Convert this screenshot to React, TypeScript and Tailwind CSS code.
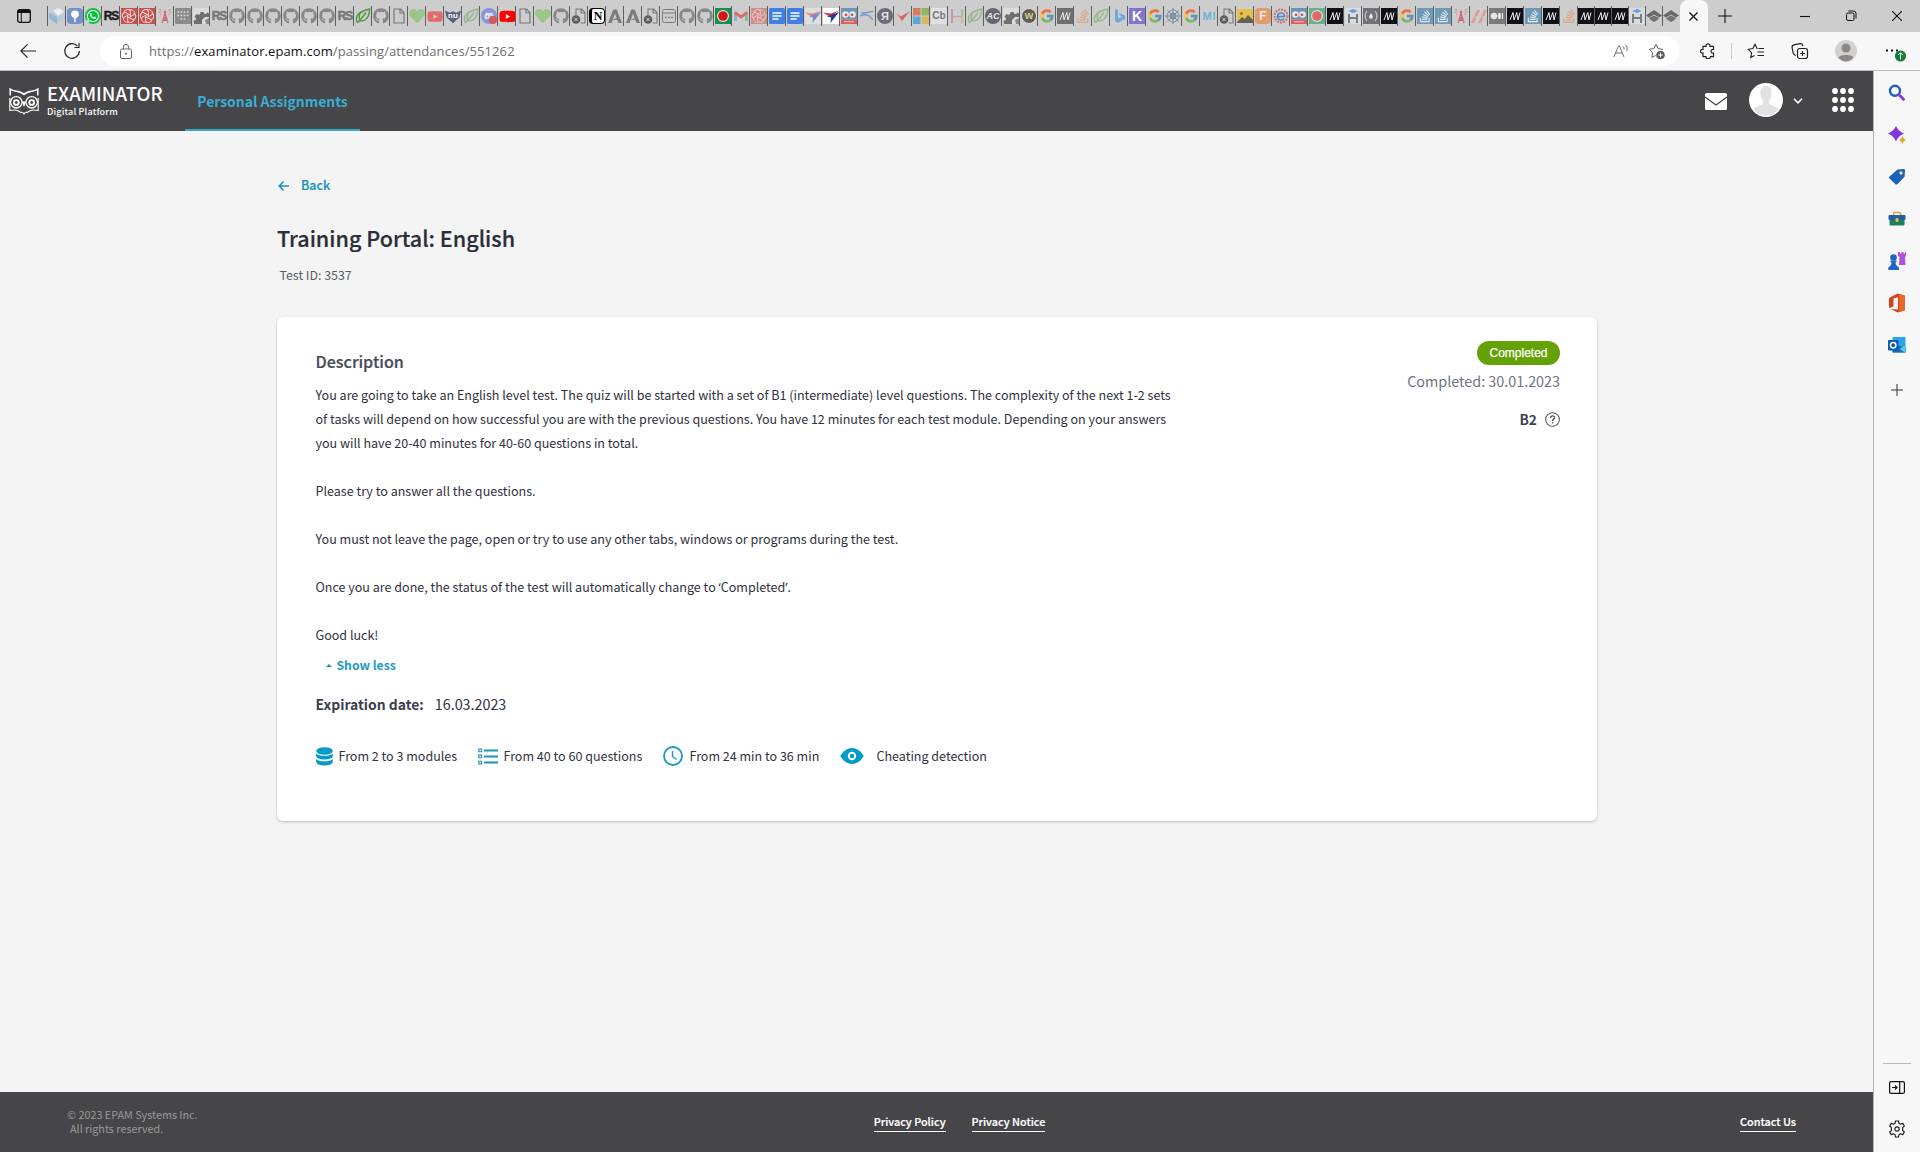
import React from "react";
import { FaGithub, FaWhatsapp, FaYoutube, FaStackOverflow, FaHeart, FaDiscord } from "react-icons/fa";
import { FcGoogle } from "react-icons/fc";

type Kids = { children?: React.ReactNode };

/* ---------- tab favicons ---------- */

function Tile({ className = "", children }: Kids & { className?: string }) {
  return (
    <span className={`flex h-4 w-4 items-center justify-center overflow-hidden font-['Liberation_Sans',sans-serif] leading-none ${className}`}>
      {children}
    </span>
  );
}

function Svg16({ className = "", children }: Kids & { className?: string }) {
  return (
    <svg viewBox="0 0 16 16" className={`h-4 w-4 ${className}`} fill="none">
      {children}
    </svg>
  );
}

const Cube = () => (
  <Svg16>
    <path d="M0 5l8-4 8 4v5l-8 6-8-6z" fill="#b9cbd6" />
    <path d="M0 5l8 4v7l-8-6z" fill="#8fb9d4" />
    <path d="M4 2.500L10 0l5 4-6 4z" fill="#eceeef" />
  </Svg16>
);
const Pin = () => (
  <Tile className="rounded-sm bg-[#7590cc]">
    <svg viewBox="0 0 16 16" className="h-4 w-4"><path d="M8 2.500a4 4 0 0 1 4 4c0 2-2.500 3-3.300 4.200V14H7.300v-3.300C6.500 9.500 4 8.500 4 6.500a4 4 0 0 1 4-4z" fill="#fff" /></svg>
  </Tile>
);
const Whats = () => (
  <Tile className="rounded-lg bg-[#0fc143]"><FaWhatsapp className="h-3.5 w-3.5 text-white" /></Tile>
);
const RsDark = () => <Tile className="text-[12px] font-black tracking-[-1px] text-[#1d1d1d] [-webkit-text-stroke:0.500px_#1d1d1d]">RS</Tile>;
const Rs = () => <Tile className="text-[12px] font-black tracking-[-1px] text-[#777] [-webkit-text-stroke:0.500px_#777]">RS</Tile>;
const petal = "M8 2.200c3-1.600 6.200 1 5.200 4.300L8.500 9.200";
const spiral = (
  <g stroke="#f3dcdb" strokeWidth="1" fill="none">
    <path d={petal} />
    <path d={petal} transform="rotate(60 8 8)" />
    <path d={petal} transform="rotate(120 8 8)" />
    <path d={petal} transform="rotate(180 8 8)" />
    <path d={petal} transform="rotate(240 8 8)" />
    <path d={petal} transform="rotate(300 8 8)" />
  </g>
);
const Red = () => <Svg16><rect width="16" height="16" fill="#cb4f4c" />{spiral}</Svg16>;
const RedPale = () => <Svg16><rect width="16" height="16" fill="#d08c8a" /><g opacity=".7">{spiral}</g></Svg16>;
const Tower = () => (
  <Svg16>
    <path d="M8 5L5 15M8 5l3 10M6.500 9.500h3M5.800 12.500h4.400M6.500 9.500l3.700 3M9.500 9.500l-3.700 3" stroke="#d36b72" strokeWidth="1.200" />
    <circle cx="8" cy="4" r="1.300" fill="#d36b72" />
    <path d="M4.500 6L3 7M4.500 2.500L2 1M4 4.200H1.500M11.500 6L13 7M11.500 2.500L14 1M12 4.200h2.500" stroke="#d98a8f" />
  </Svg16>
);
const Dots = () => (
  <Svg16>
    <rect width="16" height="16" rx="1" fill="#8b8b8b" />
    <path d="M2.500 4h11M2.500 7.500h11" stroke="#ddd" strokeWidth="1.600" strokeDasharray="1.600 1.500" />
    <path d="M5.500 11h5" stroke="#ddd" strokeWidth="1.600" strokeDasharray="1.600 1.500" />
  </Svg16>
);
const Gear = () => (
  <Svg16>
    <rect width="16" height="16" fill="#dcdcdc" />
    <path d="M1 16l-.5-3 2.300-1.200.2-1.300-1.500-2L3.500 6l2.300.8 1.200-.6L7.500 4h3l.7 1.800L13 6l1.500-1.500L16 5.500V9h-4l-3 3v4z" fill="#6f6f6f" />
    <path d="M12 12l4-2v6h-3z" fill="#8a8a8a" />
  </Svg16>
);
const Git = () => <FaGithub className="h-4 w-4 text-[#878787]" />;
const leafPath = (
  <>
    <path d="M2 14C-.5 7 5 3.500 14.500 1 15 8 11 14.500 4 12.500" />
    <path d="M2 15C5 12 8 9 11 4.500M5 12C3.500 9 4.500 6 6 4" />
  </>
);
const Leaf = () => <Svg16><g stroke="#4f9a3c" strokeWidth="1.400">{leafPath}</g></Svg16>;
const LeafPale = () => <Svg16><g stroke="#94b98a" strokeWidth="1.400">{leafPath}</g></Svg16>;
const Doc = () => <Svg16><path d="M3 1h6.500L13 4.700V15H3zM9 1v4h4" stroke="#777" strokeWidth="1.200" /></Svg16>;
const DocX = () => (
  <Svg16>
    <path d="M5 8V1h5.500L14 4.500V15H9.500M10 1v4h4" stroke="#777" strokeWidth="1.100" />
    <circle cx="5" cy="11.500" r="4.300" fill="#5f5f5f" />
    <path d="M3.600 10.100l2.800 2.800M6.400 10.100l-2.800 2.800" stroke="#ddd" />
  </Svg16>
);
const Heart = () => <FaHeart className="h-4 w-4 text-[#9cc48d]" />;
const YtPale = () => <FaYoutube className="h-[17px] w-[17px] text-[#e26a6d]" />;
const Yt = () => <Tile className="bg-[radial-gradient(#fff_30%,transparent_31%)]"><FaYoutube className="h-[17px] w-[17px] shrink-0 text-[#f00]" /></Tile>;
const Nu = () => (
  <Tile className="text-[8px] font-bold text-white">
    <span className="flex h-4 w-4 items-center justify-center bg-[#5d617d] [clip-path:polygon(0_15%,30%_30%,50%_20%,70%_30%,100%_15%,90%_60%,50%_95%,10%_60%)]">nu</span>
  </Tile>
);
const Discord = () => (
  <span className="relative">
    <Tile className="rounded-full bg-[#8a94dc]"><FaDiscord className="h-2.5 w-2.5 text-[#dfe1f0]" /></Tile>
    <span className="absolute right-0 bottom-0 h-2 w-2 rounded-full bg-[#d7575b]" />
  </span>
);
const Notion = () => <Tile className="rounded-sm border-[1.500px] border-l-[3px] border-black bg-white font-['Liberation_Serif',serif] text-[12px] font-bold text-black">N</Tile>;
const Ay = () => (
  <Svg16>
    <path d="M1 15L6.300 1.500h3.400L15 15h-3.600L8 5.500 4.600 15z" fill="#7c7c7c" />
    <path d="M5 12l6-2.500v2.300z" fill="#7c7c7c" />
  </Svg16>
);
const Browser = () => (
  <Svg16>
    <rect x="1.500" y="1.500" width="13" height="13" rx="2" stroke="#7b7b7b" />
    <path d="M1.500 5h13" stroke="#7b7b7b" />
    <path d="M4 9.500h8" stroke="#777" strokeWidth="1.600" strokeDasharray="1.600 1.500" />
  </Svg16>
);
const Rec = () => (
  <Svg16><rect width="16" height="16" fill="#12914f" /><circle cx="8" cy="8" r="6" fill="#f0dcd8" /><circle cx="8" cy="8" r="4.800" fill="#d6141b" /></Svg16>
);
const RecPale = () => (
  <Svg16><rect width="16" height="16" fill="#66b48c" /><circle cx="8" cy="8" r="6" fill="#e6d9d6" /><circle cx="8" cy="8" r="4.800" fill="#dd6a6d" /></Svg16>
);
const Gmail = () => (
  <Svg16>
    <path d="M1 13V4h3v9z" fill="#8fb0e0" /><path d="M12 13V4h3v9z" fill="#86bf93" />
    <path d="M1.800 4.500L8 9l6.200-4.500" stroke="#dd6f68" strokeWidth="2.800" />
  </Svg16>
);
const GDoc = () => <Svg16><rect width="16" height="16" rx="1.500" fill="#3f7fe8" /><path d="M3.500 5h9M3.500 8h9M3.500 11h6" stroke="#fff" strokeWidth="1.500" /></Svg16>;
const plane = (
  <>
    <path d="M0 4.500l8 1L16 2.500 7 9z" fill="#da3a3f" />
    <path d="M4 8.500L16 4 7.500 15 8 9.500z" fill="#243a9c" />
  </>
);
const PlanePale = () => <Svg16><rect width="16" height="16" fill="#dedede" /><g opacity=".5">{plane}</g></Svg16>;
const Plane = () => <Svg16><rect width="16" height="16" fill="#fff" />{plane}</Svg16>;
const Owl = () => (
  <Svg16>
    <rect width="16" height="11.500" fill="#6d93b5" /><rect y="11.500" width="16" height="4.500" fill="#d9605f" />
    <circle cx="4.500" cy="6.500" r="3.300" fill="#e7e9eb" /><circle cx="11.500" cy="6.500" r="3.300" fill="#e7e9eb" />
    <circle cx="5" cy="6.800" r="1.400" fill="#c85050" /><circle cx="11" cy="6.800" r="1.400" fill="#c85050" />
    <path d="M3 13.700h10" stroke="#f0c9c8" />
  </Svg16>
);
const Swoosh = () => <Svg16><path d="M2 4.500C5 6 10 3.500 14.500 3.500M1 8C5 5.500 11 6.500 13.500 12" stroke="#7d9dcb" strokeWidth="1.600" /></Svg16>;
const Ya = () => <Tile className="rounded-full bg-[#6d6d7c] text-[11px] font-bold text-[#e3e3e3]">Я</Tile>;
const Check = () => <Svg16><path d="M1.500 5.500L6 8.500 15 3 7 13z" fill="#d86760" /></Svg16>;
const Ms = () => <Svg16><path d="M0 0h7.500v7.500H0z" fill="#d97b5d" /><path d="M8.500 0H16v7.500H8.500z" fill="#91b560" /><path d="M0 8.500h7.500V16H0z" fill="#5da8ce" /><path d="M8.500 8.500H16V16H8.500z" fill="#dbb65a" /></Svg16>;
const Cb = () => <Tile className="bg-[#e0e0e0] text-[10px] font-bold text-[#777]">Cb</Tile>;
const HColor = () => <Svg16><path d="M3 1v14" stroke="#b98ab9" strokeWidth="1.500" /><path d="M3 8.500h10" stroke="#d69aa0" strokeWidth="1.500" /><path d="M13 1v7" stroke="#9ab68f" strokeWidth="1.500" /><path d="M13 8v7" stroke="#c9b37b" strokeWidth="1.500" /></Svg16>;
const Ac = () => <Tile className="rounded-full bg-[#666671] text-[9px] font-bold text-[#e5e5e5] italic">AC</Tile>;
const Wt = () => <Tile className="rounded-full border border-[#ddd] bg-[#5f5e54] text-[9px] font-bold text-[#d9cf8b]">W</Tile>;
const Goo = () => <FcGoogle className="h-4 w-4 opacity-65" />;
const mPath = <path d="M3 12L6 4.500M7 12l2.800-7.500M11 12l2-7.500M6 4.500L7 12M9.800 4.500L11 12" stroke="#eee" strokeWidth="1" />;
const MGrey = () => <Svg16><rect width="16" height="16" fill="#6f6f6f" />{mPath}</Svg16>;
const Mdn = () => <Svg16><rect width="16" height="16" fill="#101018" />{mPath}</Svg16>;
const StackO = () => <FaStackOverflow className="h-4 w-4 text-[#d8aa85]" />;
const StackB = () => <Tile className="bg-[#6e9ab8]"><FaStackOverflow className="h-3.5 w-3.5 text-[#dfe8ee]" /></Tile>;
const Bing = () => <Svg16><path d="M4 1l3 1v8.500l4-2-2-1L8 5l6 2.500V11l-7 4-3-2z" fill="#6fa9da" /></Svg16>;
const Kt = () => <Tile className="bg-[#8274cf] text-[14px] font-bold text-white">K</Tile>;
const Web = () => (
  <Svg16><g stroke="#6d8ba3" strokeWidth=".9"><path d="M8 0v16M0 8h16M2.300 2.300l11.400 11.400M13.700 2.300L2.300 13.700" /><circle cx="8" cy="8" r="3" fill="#7f9bb0" /><circle cx="8" cy="8" r="6" /></g></Svg16>
);
const Mi = () => <Tile className="gap-px text-[11px] font-bold text-[#6fb4d8]"><span>M</span><span>I</span></Tile>;
const Pic = () => <Svg16><rect y="1" width="16" height="14" fill="#e3bf4c" /><path d="M0 14l5-5 3 2 3-4 5 5v3H0z" fill="#666055" /><circle cx="4.500" cy="5.500" r="1.500" fill="#b5603a" /></Svg16>;
const Ft = () => <Tile className="rounded-sm bg-[#e39a6c] text-[12px] font-bold text-[#f6e9df]">F</Tile>;
const Eg = () => (
  <Svg16>
    <circle cx="8" cy="8" r="6.500" stroke="#cf7272" strokeWidth="2" strokeDasharray="2 1" />
    <path d="M4.500 8.500h7C11.500 3.500 4.500 4 4.500 8.500c0 4 5 4.500 6.500 2" stroke="#5685bd" strokeWidth="1.600" />
  </Svg16>
);
const HBlue = () => (
  <Svg16><rect width="16" height="16" fill="#d9dbde" /><path d="M4 6v9M12 6v9M4 10h8" stroke="#777b82" strokeWidth="2" /><path d="M3 3l5-2 5 2-5 2z" fill="#6d9be0" /></Svg16>
);
const FreeC = () => (
  <Svg16><rect width="16" height="16" fill="#71717c" /><path d="M4 3C1.500 6 1.500 10 4 13M12 3c2.500 3 2.500 7 0 10" stroke="#e4e4e4" /><path d="M8 4.500c.3 1.500 2.200 3 1.800 4.800-.4 2-3.200 2-3.600 0C5.800 8 7.500 6.500 8 4.500z" fill="#e4e4e4" /></Svg16>
);
const Stripes = () => <Svg16><path d="M0 15L6 2h3L3 15zM7 15l6-13h3l-6 13z" fill="#dc9d94" /><path d="M1 9h6M8 9h6" stroke="#cdcdcd" /></Svg16>;
const Med = () => <Svg16><rect width="16" height="16" fill="#7a7a7a" /><circle cx="5" cy="8" r="3.300" fill="#e6e6e6" /><ellipse cx="10.500" cy="8" rx="1.500" ry="3.200" fill="#e6e6e6" /><path d="M13.500 5v6" stroke="#e6e6e6" strokeWidth="1.200" /></Svg16>;
const Grad = () => (
  <Svg16><path d="M0 7.500l8-5.500 8 5.500-3 2L8 6.500l-5 3z" fill="#686868" /><path d="M3 10l5-2.500 5 2.500-1.500 2L8 14l-3.500-2z" fill="#747474" /></Svg16>
);

const TABS: React.FC[] = [
  Cube, Pin, Whats, RsDark, Red, Red, Tower, Dots, Gear, Rs, Git, Git, Git, Git, Git, Git, Rs, Leaf, Git, Doc,
  Heart, YtPale, Nu, LeafPale, Discord, Yt, Doc, Heart, Git, DocX, Notion, Ay, Ay, DocX, Browser, Git, Git, Rec, Gmail, RedPale,
  GDoc, GDoc, PlanePale, Plane, Owl, Swoosh, Ya, Check, Ms, Cb, HColor, LeafPale, Ac, Gear, Wt, Goo, MGrey, StackO, LeafPale, Bing,
  Kt, Goo, Web, Goo, Mi, DocX, Pic, Ft, Eg, Owl, RecPale, Mdn, HBlue, FreeC, Mdn, Goo, StackB, StackB, Tower, Stripes,
  Med, Mdn, StackB, Mdn, StackO,
];
const TABS_NARROW: React.FC[] = [Mdn, Mdn, Mdn, HBlue, Grad, Grad];

function TabStrip() {
  return (
    <div className="flex h-8 items-center bg-[#cdcdcd]">
      <div className="flex w-[47px] shrink-0 justify-center">
        <svg viewBox="0 0 14 14" className="h-3.5 w-3.5" fill="none" stroke="#111">
          <rect x=".7" y=".7" width="12.600" height="12.600" rx="2" strokeWidth="1.300" />
          <path d="M.7 2.500h12.600" strokeWidth="3" /><path d="M4.300 3v10" strokeWidth="1" />
        </svg>
      </div>
      {TABS.map((Icon, i) => (
        <div key={i} className="flex h-5 w-[18.010px] shrink-0 items-center border-l border-[#5f5f5f] pl-px">
          <Icon />
        </div>
      ))}
      {TABS_NARROW.map((Icon, i) => (
        <div key={i} className="flex h-5 w-[17.100px] shrink-0 items-center border-l border-[#5f5f5f]">
          <Icon />
        </div>
      ))}
      <div className="flex h-8 w-7 shrink-0 items-center justify-center rounded-t-lg bg-[#f7f7f7]">
        <svg viewBox="0 0 10 10" className="mt-px h-[9px] w-[9px]" stroke="#111" strokeWidth="1.400"><path d="M.5.5l9 9M9.500.5l-9 9" /></svg>
      </div>
      <svg viewBox="0 0 14 14" className="ml-2.5 h-3.5 w-3.5" stroke="#111" strokeWidth="1.100"><path d="M7 0v14M0 7h14" /></svg>
      <div className="ml-auto flex items-center gap-9 pr-[18px]">
        <svg viewBox="0 0 10 10" className="h-2.5 w-2.5" stroke="#111" strokeWidth="1.100"><path d="M0 5.500h10" /></svg>
        <svg viewBox="0 0 10 10" className="h-2.5 w-2.5 overflow-visible" fill="none" stroke="#111"><rect x=".5" y="2" width="7.500" height="7.500" rx="1.500" /><path d="M2.500 0h5a2.500 2.500 0 0 1 2.500 2.500V7.500" /></svg>
        <svg viewBox="0 0 10 10" className="h-2.5 w-2.5" stroke="#111" strokeWidth="1.100"><path d="M0 0l10 10M10 0L0 10" /></svg>
      </div>
    </div>
  );
}

const STAR = "M8 1.200l2.100 4.400 4.700.7-3.400 3.400.8 4.800L8 12.200l-4.200 2.300.8-4.800L1.200 6.300l4.700-.7z";

function Toolbar() {
  return (
    <div className="flex h-[39px] items-center border-b border-[#b9bcbc] bg-[#f7f7f7]">
      <svg viewBox="0 0 16 16" className="ml-5 h-4 w-4" fill="none" stroke="#222" strokeWidth="1.200"><path d="M16 8H.8M7.500 1.300L.8 8l6.700 6.700" /></svg>
      <svg viewBox="0 0 16 16" className="ml-7 h-4 w-4 overflow-visible" fill="none" stroke="#222" strokeWidth="1.200"><path d="M15.300 8A7.300 7.300 0 1 1 13.500 3.200M15 0v4.500h-4.500" /></svg>
      <div className="ml-5 flex h-[30px] w-[1579px] items-center rounded-full bg-white">
        <svg viewBox="0 0 12 15" className="ml-5 h-[15px] w-3" fill="none" stroke="#666"><rect x=".5" y="5" width="11" height="9.500" rx="1.500" /><path d="M3.300 5V3.200a2.700 2.700 0 0 1 5.400 0V5" /><circle cx="6" cy="9.700" r=".6" fill="#333" /></svg>
        <span className="ml-[17px] font-['Open_Sans',sans-serif] text-[13px] leading-5 tracking-[0.090px] whitespace-nowrap text-[#6e6e6e]">
          https://<span className="text-[#111]">examinator.epam.com</span>/passing/attendances/551262
        </span>
        <svg viewBox="0 0 16 16" className="mr-px ml-auto h-4 w-4" fill="none" stroke="#707070"><path d="M.8 14L5.500 3h1L11 14M2.500 10h6.800M10 3.500c1 .8 1.200 2 .9 3.200M12.200 1.500c2 1.600 2.500 4 1.600 6.500" /></svg>
        <svg viewBox="0 0 17 17" className="mr-3.5 ml-[18px] h-[17px] w-[17px]" fill="none" stroke="#666"><path d={STAR} /><circle cx="12.500" cy="12" r="5" fill="#fff" stroke="none" /><circle cx="12.500" cy="12" r="4.300" fill="#5c5c5c" stroke="none" /><path d="M12.500 9.700v4.600M10.200 12h4.600" stroke="#fff" /></svg>
      </div>
      <svg viewBox="0 0 16 16" className="ml-[21px] h-4 w-4" fill="none" stroke="#222" strokeWidth="1.200"><path d="M3 3.300h3c-.6-3.300 4.600-3.300 4 0h3.500v3.200c-3.300-.5-3.300 4 0 3.500v3.700H10c.4-.1.400 2-2 2s-2-2-2-2H3V10C-.5 10.500-.5 6 3 6.500z" /></svg>
      <div className="ml-[15px] h-4 w-px bg-[#ccc]" />
      <svg viewBox="0 0 17 16" className="ml-[15px] h-4 w-[17px]" fill="none" stroke="#222" strokeWidth="1.100"><path d="M9.500 5.500H10L8 1.200 5.900 5.600l-4.700.7 3.400 3.400-.8 4.800L7.500 12.500M11.500 5.500H17M10.500 9H17M10.500 12.500H17" /></svg>
      <svg viewBox="0 0 16 16" className="ml-7 h-4 w-4 overflow-visible" fill="none" stroke="#222" strokeWidth="1.200"><rect x="5.500" y="5.500" width="10" height="10" rx="2.200" /><path d="M10.500 8v5M8 10.500h5M3.800 12.500C1.500 12 1.300 11 .9 9L.1 4.500C-.1 3 .5 2.200 2 1.900l6-1.300c1.500-.3 2.500.3 2.900 2.400" /></svg>
      <svg viewBox="0 0 22 22" className="ml-[27px] h-[22px] w-[22px]"><circle cx="11" cy="11" r="11" fill="#d3d1cf" /><circle cx="11" cy="8" r="4.600" fill="#8b8784" /><path d="M3.500 17.500c1-3.500 14-3.500 15 0A11 11 0 0 1 11 21.500a11 11 0 0 1-7.500-4z" fill="#8b8784" /></svg>
      <svg viewBox="0 0 22 16" className="ml-7 h-4 w-[22px] overflow-visible"><path d="M1 7.500h12.500" stroke="#111" strokeWidth="2" strokeDasharray="2 3" /><circle cx="15.500" cy="13" r="5.600" fill="#177d3c" /><path d="M15.500 16.300V10M13.200 12l2.300-2.300 2.300 2.300" stroke="#fff" fill="none" /></svg>
    </div>
  );
}

/* ---------- site header ---------- */

function OwlLogo() {
  return (
    <svg viewBox="0 0 30 27" className="h-[27px] w-[30px]" fill="none" stroke="#fff" strokeWidth="1.100">
      <path d="M1.200 7.500V1C5 4.200 11 2.500 15 6.500c4-4 10-2.300 13.800-5.500v6.500" strokeWidth="1.500" />
      <path d="M.8 10V22.500c3.500-.8 6-.8 8.700.5L12 24.500c1-.5 2-.3 3 1.500 1-1.800 2-2 3-1.500l2.500-1.500c2.700-1.300 5.200-1.300 8.700-.5V10" />
      <circle cx="7.300" cy="14.300" r="5.700" strokeWidth="1.300" /><circle cx="22.700" cy="14.300" r="5.700" strokeWidth="1.300" />
      <circle cx="7.300" cy="14.500" r="2.400" strokeWidth="1.900" /><circle cx="22.700" cy="14.500" r="2.400" strokeWidth="1.900" />
      <path d="M12.800 13.500h4.400L15 19z" fill="#fff" stroke="none" />
    </svg>
  );
}

function Header() {
  return (
    <header className="flex h-[60px] shrink-0 items-stretch bg-[#464547] text-white">
      <div className="flex w-[185px] items-start pt-[11px] pl-[9px]">
        <div className="mt-1.5"><OwlLogo /></div>
        <div className="ml-2">
          <div className="text-[18.550px] leading-[22px] font-medium">EXAMINATOR</div>
          <div className="mt-px text-[9px] leading-[14px] font-medium tracking-[0.200px]">Digital Platform</div>
        </div>
      </div>
      <a className="flex w-[175px] items-center justify-center border-b-2 border-[#3ba6c6] pt-0.5 text-[13.900px] leading-5 font-bold text-[#3aaed4]">Personal Assignments</a>
      <div className="ml-auto flex items-center pr-[19px] pb-0.5">
        <svg viewBox="0 0 22 17" className="mt-0.5 mr-[22px] h-[17px] w-[22px]"><rect width="22" height="17" rx="1.500" fill="#fff" /><path d="M0 4l11 8 11-8" fill="none" stroke="#464547" strokeWidth="1.200" /></svg>
        <svg viewBox="0 0 34 34" className="h-[34px] w-[34px]">
          <clipPath id="face"><circle cx="17" cy="17" r="15.500" /></clipPath>
          <circle cx="17" cy="17" r="17" fill="#fff" />
          <g clipPath="url(#face)" fill="#e2e2e2"><path d="M17 3c4 0 6 2.500 5.500 8-.4 4-1.500 5.500-2.500 7v3l8 3.500c1.500 1 2 4 2 9.500H4c0-5.500.5-8.500 2-9.500L14 21v-3c-1-1.500-2.100-3-2.500-7C11 5.500 13 3 17 3z" /></g>
        </svg>
        <svg viewBox="0 0 10 6" className="mt-0.5 ml-2.5 h-1.5 w-2.5" fill="none" stroke="#fff" strokeWidth="1.600"><path d="M1 .8l4 4 4-4" /></svg>
        <svg viewBox="0 0 22 24" className="ml-[29px] h-6 w-[22px]" fill="#fff">
          {[3, 11, 19].map((x) => [3, 12, 21].map((y) => <circle key={`${x}-${y}`} cx={x} cy={y} r="2.900" />))}
        </svg>
      </div>
    </header>
  );
}

/* ---------- test card ---------- */

function Fact({ icon, text, className = "" }: { icon: React.ReactNode; text: string; className?: string }) {
  return (
    <div className={`flex items-center ${className}`}>
      {icon}
      <span className="text-[12.530px] leading-5 whitespace-nowrap">{text}</span>
    </div>
  );
}

function Facts() {
  return (
    <div className="mt-[30px] flex h-6 items-center">
      <Fact
        className="w-[162px]"
        text="From 2 to 3 modules"
        icon={
          <svg viewBox="0 0 17 19" className="mr-1.5 h-[19px] w-[17px]" fill="#049cc6"><ellipse cx="8.500" cy="4" rx="8.300" ry="3.800" /><path d="M.2 6.500C3 9.600 14 9.600 16.800 6.500v3c-1 4-15.600 4-16.600 0zM.2 12c2.800 3.100 13.800 3.100 16.600 0v3c-1 4.700-15.600 4.700-16.600 0z" /></svg>
        }
      />
      <Fact
        className="w-[185px]"
        text="From 40 to 60 questions"
        icon={
          <svg viewBox="0 0 20 17" className="mr-1.5 h-[17px] w-5" fill="none" stroke="#1a93b4"><path d="M6 2.500h14M6 8.500h14M6 14.500h14" strokeWidth="1.800" /><path d="M.8 1h2.700v2.700H.8zM.8 7.100h2.700v2.700H.8zM.8 13.200h2.700v2.700H.8z" strokeWidth="1.100" /></svg>
        }
      />
      <Fact
        className="w-[177px]"
        text="From 24 min to 36 min"
        icon={
          <svg viewBox="0 0 20 20" className="mr-[7px] h-5 w-5" fill="none" stroke="#1a98bf"><circle cx="10" cy="10" r="9" strokeWidth="1.800" /><path d="M9.500 5v5.500l4 3" strokeWidth="1.400" /></svg>
        }
      />
      <Fact
        text="Cheating detection"
        icon={
          <svg viewBox="0 0 24 16" className="mr-[13px] h-4 w-6"><path d="M.3 8C3 3 7.500 0 12 0s9 3 11.700 8C21 13 16.500 16 12 16S3 13 .3 8z" fill="#049cc6" /><circle cx="12" cy="8" r="3.200" fill="none" stroke="#fff" strokeWidth="2" /></svg>
        }
      />
    </div>
  );
}

function Card() {
  return (
    <section className="mt-8 flex h-[504px] w-[1320px] justify-between rounded-md bg-white pr-[37px] pl-[38.500px] text-[#303240] shadow-[0_1px_3px_rgba(0,0,0,0.220)]">
      <div className="w-[870px] pt-[33px]">
        <h2 className="text-[16.100px] leading-[22px] font-medium text-[#464a5a] [-webkit-text-stroke:0.200px_#464a5a]">Description</h2>
        <div className="mt-[11px] text-[12.540px] leading-6 whitespace-nowrap">
          <p>You are going to take an English level test. The quiz will be started with a set of B1 (intermediate) level questions. The complexity of the next 1-2 sets</p>
          <p>of tasks will depend on how successful you are with the previous questions. You have 12 minutes for each test module. Depending on your answers</p>
          <p>you will have 20-40 minutes for 40-60 questions in total.</p>
          <p className="mt-6">Please try to answer all the questions.</p>
          <p className="mt-6">You must not leave the page, open or try to use any other tabs, windows or programs during the test.</p>
          <p className="mt-6">
            Once you are done, the status of the test will automatically change to{" "}
            <span className="font-['Noto_Sans',sans-serif] leading-none">‘</span>Completed<span className="font-['Noto_Sans',sans-serif] leading-none">’</span>.
          </p>
          <p className="mt-6">Good luck!</p>
        </div>
        <a className="mt-2 flex h-5 items-center pl-2.5 text-[12.200px] leading-5 font-bold text-[#1f9abf]">
          <svg viewBox="0 0 6 3" className="mr-[5px] h-[3px] w-1.5" fill="#1a93b8"><path d="M0 3l3-3 3 3z" /></svg>
          Show less
        </a>
        <div className="mt-[19px] flex h-5 items-center text-[14.300px] leading-5">
          <span className="text-[13.900px] font-bold text-[#3d4050]">Expiration date:</span>
          <span className="ml-[11px]">16.03.2023</span>
        </div>
        <Facts />
      </div>
      <div className="flex flex-col items-end pt-6">
        <span className="flex h-6 w-[83px] items-center justify-center rounded-full bg-[#64a103] font-['Liberation_Sans',sans-serif] text-[12px] leading-none text-white [-webkit-text-stroke:0.250px_white]">Completed</span>
        <span className="mt-1.5 text-[14.350px] leading-5 text-[#6f7383]">Completed: 30.01.2023</span>
        <div className="mt-[18px] flex h-5 items-center">
          <span className="text-[13.800px] leading-5 font-bold text-[#3d4152]">B2</span>
          <svg viewBox="0 0 16 16" className="ml-2 h-[15px] w-[15px]" fill="none" stroke="#555"><circle cx="8" cy="8" r="7.300" strokeWidth="1.100" /><path d="M5.900 6.300c0-3 4.300-2.700 4.300-.2 0 1.600-2.100 1.500-2.100 3.400M8.100 10.800v1.500" strokeWidth="1.500" /></svg>
        </div>
      </div>
    </section>
  );
}

function Footer() {
  const link = "border-b pb-px text-[10.850px] leading-[18px] font-medium text-white border-white whitespace-nowrap [-webkit-text-stroke:0.200px_white]";
  return (
    <footer className="grid h-[60px] shrink-0 grid-cols-[1fr_auto_1fr] bg-[#464547]">
      <div className="pt-[15px] pl-[67px] text-[10.800px] leading-[14px] text-[#999]">
        <div>© 2023 EPAM Systems Inc.</div>
        <div className="pl-[3px]">All rights reserved.</div>
      </div>
      <div className="flex items-start gap-[26px] pt-[20px] pl-[46px]">
        <a className={link}>Privacy Policy</a>
        <a className={link}>Privacy Notice</a>
      </div>
      <div className="flex items-start justify-end pt-[20px] pr-[77px]">
        <a className={link}>Contact Us</a>
      </div>
    </footer>
  );
}

/* ---------- browser side bar ---------- */

function Cell({ children }: Kids) {
  return <div className="flex h-[42px] items-center justify-center">{children}</div>;
}

function SideBar() {
  const cls = "h-[18px] w-[18px]";
  return (
    <aside className="flex w-[47px] shrink-0 flex-col border-l border-[#b5b8b8] bg-[#f7f7f7] pt-px">
      <Cell><svg viewBox="0 0 18 18" className={cls} fill="none"><circle cx="7" cy="6.800" r="5" stroke="#1c5fc0" strokeWidth="2.400" /><path d="M11.500 11.300l4 4" stroke="#8a3ee0" strokeWidth="3" strokeLinecap="round" /></svg></Cell>
      <Cell><svg viewBox="0 0 18 18" className={cls}><path d="M8 0c2 3.700 3.700 5.500 8 7.500-4.300 2-6 3.800-8 8-2-4.200-3.700-6-8-8C4.300 5.500 6 3.700 8 0z" fill="#8038dc" /><path d="M14.500 10c.9 2.300 1.500 3 3.500 4-2 1-2.600 1.700-3.500 4-.9-2.300-1.500-3-3.500-4 2-1 2.600-1.700 3.500-4z" fill="#e0a526" /></svg></Cell>
      <Cell><svg viewBox="0 0 18 18" className={cls}><path d="M9.500 1.500L15.500 1c1 0 1.500.5 1.500 1.500l-.3 5.500c0 .5-.3 1-.6 1.300L9.500 16c-.8.800-1.500.8-2.300 0L1.500 10.500c-.7-.7-.7-1.400 0-2z" fill="#1b63b8" /><circle cx="13" cy="5" r="1.700" fill="#ffe08a" /></svg></Cell>
      <Cell><svg viewBox="0 0 18 18" className={cls}><path d="M5.500 5.500V3.500c0-.6.4-1 1-1h5c.6 0 1 .4 1 1v2" fill="none" stroke="#d9a62c" strokeWidth="1.500" /><rect x=".5" y="5" width="17" height="5" rx="1" fill="#1e5fa8" /><path d="M1.500 10h15v4c0 1-.5 1.500-1.500 1.500H3c-1 0-1.500-.5-1.500-1.500z" fill="#1e7f63" /><rect x="7.500" y="8" width="3" height="4" rx="1" fill="#ecc04a" /></svg></Cell>
      <Cell><svg viewBox="0 0 18 18" className={cls}><path d="M10 0h2v1.500h1.500V0h2v1.500H17V0h1v4l-1 1 .5 8H11l.5-8L10 4z" fill="#b052e0" /><circle cx="5.500" cy="5.500" r="3.300" fill="#1e66c4" /><path d="M2.500 8.500h6v1.500l-1 .5c0 2 1.500 3.500 3 4.500.8.700.8 3 0 3H.8c-.8 0-.8-2.300 0-3 1.500-1 2.700-2.500 2.700-4.500l-1-.5z" fill="#1e66c4" /></svg></Cell>
      <Cell><svg viewBox="0 0 18 20" className="h-5 w-[18px]"><path d="M1 5l8.500-4.500L17 2.800v14.400L9.500 19.500 3 16l7 .5V4.200L5.500 5.500v8L1 15z" fill="#d5421c" /><path d="M11 .8l6 2v14.400l-6 1.800z" fill="#e8682a" /></svg></Cell>
      <Cell><svg viewBox="0 0 18 18" className={cls}><rect x="4.500" y="1" width="13" height="15.500" rx="1" fill="#2aa5e6" /><path d="M4.500 9l13 2v5.500h-13z" fill="#0f6cbd" /><path d="M17.500 9l-6 4 6 4z" fill="#58c4f2" /><rect y="4" width="10.500" height="10.500" rx="1" fill="#0d5cab" /><circle cx="5.200" cy="9.200" r="2.700" fill="none" stroke="#fff" strokeWidth="1.500" /></svg></Cell>
      <div className="mt-[3px] flex h-[42px] items-center justify-center"><svg viewBox="0 0 12 12" className="h-3 w-3" stroke="#333"><path d="M6 0v12M0 6h12" /></svg></div>
      <div className="mt-auto mb-0.5 flex flex-col">
        <div className="mx-auto mb-[2px] h-px w-7 bg-[#bbb]" />
        <Cell><svg viewBox="0 0 16 13" className="h-[13px] w-4" fill="none" stroke="#111" strokeWidth="1.200"><rect x=".6" y=".6" width="14.800" height="11.800" rx="1.500" /><path d="M10.700.6v11.800M3 6.500h5M6 4.500l2 2-2 2" /></svg></Cell>
        <Cell><svg viewBox="0 0 18 18" className={cls} fill="none" stroke="#222" strokeWidth="1.200"><path d="M7.500 1h3l.5 2.300 1.500.9 2.300-.8 1.500 2.600-1.700 1.700v2.600l1.700 1.700-1.500 2.600-2.300-.8-1.500.9-.5 2.300h-3L7 14.700l-1.500-.9-2.300.8L1.700 12l1.700-1.700V7.700L1.700 6l1.500-2.600 2.300.8L7 3.300z" strokeLinejoin="round" /><circle cx="9" cy="9" r="2.200" /></svg></Cell>
      </div>
    </aside>
  );
}

export default function App() {
  return (
    <div className="flex h-[1152px] w-[1920px] flex-col overflow-hidden bg-[#f7f7f7] font-['Noto_Sans_CJK_SC',sans-serif]">
      <TabStrip />
      <Toolbar />
      <div className="flex min-h-0 flex-1">
        <div className="flex w-[1873px] flex-col bg-[#f4f4f4]">
          <Header />
          <main className="flex-1 pl-[277px]">
            <a className="mt-[44px] flex h-5 items-center pl-px text-[12.450px] leading-5 font-medium text-[#1a93b8] [-webkit-text-stroke:0.200px_#1a93b8]">
              <svg viewBox="0 0 12 12" className="mt-0.5 mr-3 h-3 w-[11px]" fill="none" stroke="#1a93b8" strokeWidth="1.700"><path d="M12 6H1.500M6 1L1.300 6 6 11" /></svg>
              Back
            </a>
            <h1 className="mt-[28px] text-[21.550px] leading-[30px] font-medium text-[#2b2e3a] [-webkit-text-stroke:0.200px_#2b2e3a]">Training Portal: English</h1>
            <p className="mt-3 pl-[2.500px] text-[12.400px] leading-5 text-[#5a5d69]">Test ID: 3537</p>
            <Card />
          </main>
          <Footer />
        </div>
        <SideBar />
      </div>
    </div>
  );
}
